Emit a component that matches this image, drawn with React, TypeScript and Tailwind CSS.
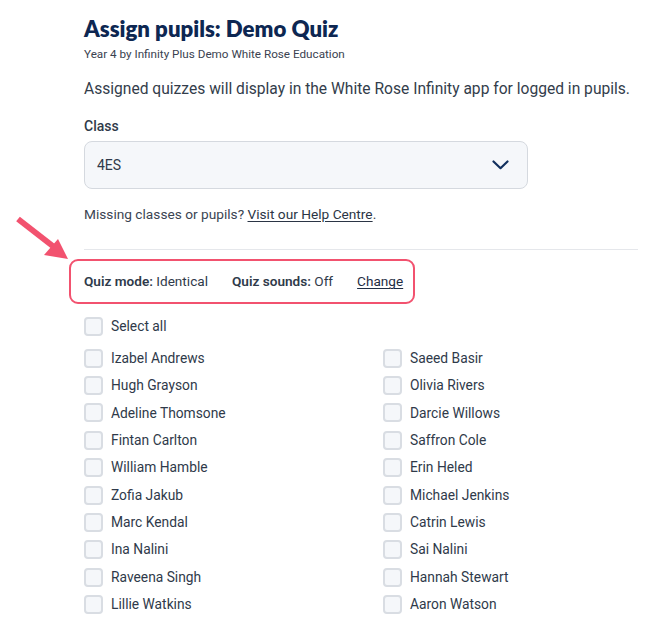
const left = [
  'Izabel Andrews',
  'Hugh Grayson',
  'Adeline Thomsone',
  'Fintan Carlton',
  'William Hamble',
  'Zofia Jakub',
  'Marc Kendal',
  'Ina Nalini',
  'Raveena Singh',
  'Lillie Watkins',
];

const right = [
  'Saeed Basir',
  'Olivia Rivers',
  'Darcie Willows',
  'Saffron Cole',
  'Erin Heled',
  'Michael Jenkins',
  'Catrin Lewis',
  'Sai Nalini',
  'Hannah Stewart',
  'Aaron Watson',
];

function Check({ label }: { label: string }) {
  return (
    <label className="flex items-center gap-[8px] h-[27.4px] cursor-pointer">
      <span className="w-[19px] h-[19px] rounded-[4px] border-2 border-[#d9dde3] bg-[#f5f7fa] shrink-0" />
      <span className="text-[13.8px] text-[#2f3a4a]">{label}</span>
    </label>
  );
}

export default function App() {
  return (
    <div className="relative bg-white min-h-[637px] pl-[84px] pr-4 pt-[14px] font-['Roboto',sans-serif] text-[#333d4b]">
      {/* arrow pointing at the quiz mode box */}
      <svg
        className="absolute left-[10px] top-[212px] pointer-events-none"
        width="64"
        height="54"
        viewBox="0 0 64 54"
      >
        <line x1="8" y1="7" x2="44" y2="35" stroke="#f2526f" strokeWidth="6" strokeLinecap="butt" />
        <polygon points="58,47 34,43 48,27" fill="#f2526f" />
      </svg>

      <h1 className="font-['Lato',sans-serif] font-extrabold text-[22.2px] leading-[29px] text-[#0d2752]">
        Assign pupils: Demo Quiz
      </h1>
      <p className="text-[11.7px] leading-[16px] mt-[3px] text-[#3a4250]">
        Year 4 by Infinity Plus Demo White Rose Education
      </p>

      <p className="text-[15.6px] leading-[20px] mt-[17px] text-[#333d4b]">
        Assigned quizzes will display in the White Rose Infinity app for logged in pupils.
      </p>

      <div className="mt-[18px] text-[14px] leading-[18px] font-medium text-[#2f3a4a]">Class</div>
      <div className="mt-[6px] w-[444px] h-[48px] rounded-[8px] border border-[#d5d9df] bg-[#f5f7fa] flex items-center justify-between pl-[12px] pr-[18px]">
        <span className="text-[14px] text-[#2f3a4a]">4ES</span>
        <svg width="17" height="10" viewBox="0 0 17 10">
          <path d="M1.5 1.5 L8.5 8.2 L15.5 1.5" fill="none" stroke="#12305e" strokeWidth="2.2" strokeLinecap="round" strokeLinejoin="round" />
        </svg>
      </div>

      <p className="mt-[16px] text-[13.7px] leading-[18px] text-[#3a4452]">
        Missing classes or pupils?{' '}
        <a href="#" className="underline text-[#2b3545] underline-offset-2">
          Visit our Help Centre
        </a>
        .
      </p>

      <div className="mt-[26px] h-px bg-[#e5e7eb] w-[554px]" />

      <div className="mt-[9px] -ml-[15px] inline-flex items-center gap-6 h-[45px] pl-[13px] pr-[10px] border-2 border-[#f2526f] rounded-[9px] text-[13.6px] text-[#2f3a4a]">
        <span>
          <span className="font-semibold">Quiz mode:</span> Identical
        </span>
        <span>
          <span className="font-semibold">Quiz sounds:</span> Off
        </span>
        <a href="#" className="underline underline-offset-2 text-[#1f2d44]">
          Change
        </a>
      </div>

      <div className="mt-[9px]">
        <Check label="Select all" />
      </div>
      <div className="mt-[4px] grid grid-cols-[299px_1fr]">
        <div className="flex flex-col">
          {left.map((n) => (
            <Check key={n} label={n} />
          ))}
        </div>
        <div className="flex flex-col">
          {right.map((n) => (
            <Check key={n} label={n} />
          ))}
        </div>
      </div>
    </div>
  );
}
